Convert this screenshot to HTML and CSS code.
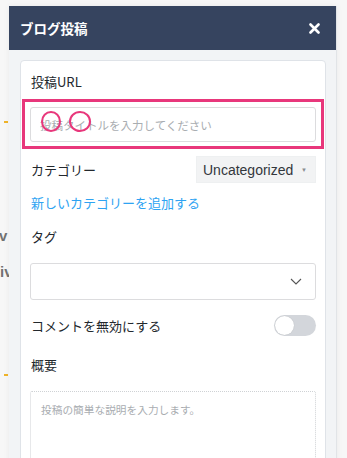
FILE: index.html
```html
<!DOCTYPE html>
<html lang="ja">
<head>
    <meta charset="UTF-8">
    <meta name="viewport" content="width=device-width, initial-scale=1.0">
    <title>ブログ投稿</title>
    <link rel="stylesheet" href="styles.css">
</head>
<body>
    <div class="page">
        <div class="behind">
            <div class="tick tick-top"></div>
            <div class="behind-text text-v">v</div>
            <div class="behind-text text-iv">iv</div>
            <div class="tick tick-bottom"></div>
        </div>

        <div class="modal">
            <div class="modal-header">
                <span class="modal-title">ブログ投稿</span>
                <svg class="close" width="11" height="11" viewBox="0 0 11 11">
                    <path d="M1.5 1.5 L9.5 9.5 M9.5 1.5 L1.5 9.5" stroke="#fff" stroke-width="2.6" stroke-linecap="round"/>
                </svg>
            </div>

            <div class="modal-body">
                <div class="card">
                    <div class="label label-first">投稿URL</div>

                    <div class="highlight">
                        <div class="url-field">
                            <input type="text" class="text-input" placeholder="投稿タイトルを入力してください">
                            <span class="mark mark-1"></span>
                            <span class="mark mark-2"></span>
                        </div>
                    </div>

                    <div class="row category-row">
                        <span class="label">カテゴリー</span>
                        <div class="select-small">
                            <span>Uncategorized</span>
                            <span class="caret">▼</span>
                        </div>
                    </div>

                    <a class="add-link" href="#">新しいカテゴリーを追加する</a>

                    <div class="label label-tag">タグ</div>
                    <div class="tag-select">
                        <svg width="12" height="7" viewBox="0 0 12 7">
                            <path d="M1 1 L6 6 L11 1" fill="none" stroke="#555" stroke-width="1.1"/>
                        </svg>
                    </div>

                    <div class="row toggle-row">
                        <span class="label">コメントを無効にする</span>
                        <div class="toggle"><span class="knob"></span></div>
                    </div>

                    <div class="label label-summary">概要</div>
                    <textarea class="summary" placeholder="投稿の簡単な説明を入力します。"></textarea>
                </div>
            </div>
        </div>

        <div class="behind-right"></div>
    </div>
</body>
</html>
```

FILE: styles.css
```css
* {
    margin: 0;
    padding: 0;
    box-sizing: border-box;
}

body {
    font-family: "Liberation Sans", "Noto Sans CJK JP", sans-serif;
    background: #f7f7f7;
    color: #23282d;
}

.page {
    display: flex;
    align-items: flex-start;
    height: 458px;
    overflow: hidden;
}

/* page content behind the modal */
.behind {
    width: 9px;
    flex-shrink: 0;
    overflow: hidden;
}

.tick {
    width: 4px;
    height: 2px;
    margin-left: 4px;
    background: #f0b429;
}

.tick-top {
    margin-top: 121px;
}

.behind-text {
    font-size: 15px;
    font-weight: bold;
    line-height: 18px;
    color: #727272;
    white-space: nowrap;
}

.text-v {
    margin-top: 104px;
    margin-left: -1px;
}

.text-iv {
    margin-top: 18px;
}

.tick-bottom {
    margin-top: 93px;
}

.behind-right {
    flex: 1;
}

/* modal */
.modal {
    width: 328px;
    margin-top: 6px;
    background: #f2f4f6;
    border-right: 1px solid #e1e4e7;
    height: 460px;
    box-shadow: 0 0 6px rgba(0,0,0,0.06);
}

.modal-header {
    height: 44px;
    background: #36445f;
    display: flex;
    justify-content: space-between;
    align-items: center;
    padding: 0 16px 0 11px;
}

.modal-title {
    color: #fff;
    font-size: 13.5px;
    font-weight: bold;
    font-family: "Noto Sans CJK JP", sans-serif;
}

.close {
    display: block;
}

.modal-body {
    padding: 10px 10px 0 11px;
}

.card {
    background: #fff;
    border: 1px solid #dfe3e8;
    border-radius: 4px;
    padding: 12px 9px 0 9px;
    height: 420px;
}

.label {
    font-family: "Noto Sans CJK JP", sans-serif;
    font-size: 13px;
    line-height: 18px;
    color: #23282d;
    padding-left: 1px;
}

.highlight {
    margin: 8px -8px 0 -8px;
    border: 3px solid #e8377b;
    padding: 5px 5px 4px 5px;
}

.url-field {
    position: relative;
}

.text-input {
    display: block;
    width: 100%;
    height: 35px;
    border: 1px solid #dcdcde;
    border-radius: 3px;
    padding: 0 9px;
    font-family: "Noto Sans CJK JP", sans-serif;
    font-size: 11.5px;
    color: #333;
    background: #fff;
    outline: none;
}

.text-input::placeholder {
    color: #a9adb1;
}

/* hand-drawn style annotation circles */
.mark {
    position: absolute;
    top: 4px;
    height: 21px;
    border: 2.5px solid #e8377b;
    border-radius: 50%;
}

.mark-1 {
    left: 11px;
    width: 20px;
}

.mark-2 {
    left: 39px;
    width: 22px;
}

.row {
    display: flex;
    justify-content: space-between;
    align-items: center;
}

.category-row {
    margin-top: 7px;
}

.select-small {
    width: 120px;
    height: 27px;
    background: #f2f3f4;
    border: 1px solid #eef0f1;
    display: flex;
    align-items: center;
    justify-content: space-between;
    padding: 0 8px 0 6px;
    font-size: 14px;
    color: #32373c;
}

.caret {
    font-size: 6px;
    color: #8a8e92;
}

.add-link {
    display: block;
    margin-top: 11px;
    padding-left: 1px;
    font-family: "Noto Sans CJK JP", sans-serif;
    font-size: 13px;
    line-height: 18px;
    color: #2ea3f2;
    text-decoration: none;
}

.label-tag {
    margin-top: 16px;
}

.tag-select {
    margin-top: 17px;
    height: 37px;
    border: 1px solid #dcdcde;
    border-radius: 3px;
    display: flex;
    justify-content: flex-end;
    align-items: center;
    padding-right: 13px;
}

.tag-select svg {
    display: block;
}

.toggle-row {
    margin-top: 15px;
}

.toggle {
    width: 42px;
    height: 21px;
    border-radius: 11px;
    background: #d3d6db;
    padding: 1px;
}

.knob {
    display: block;
    width: 19px;
    height: 19px;
    border-radius: 50%;
    background: #fff;
    box-shadow: 0 0 1px rgba(0,0,0,0.2);
}

.label-summary {
    margin-top: 20px;
}

.summary {
    display: block;
    width: 100%;
    height: 90px;
    margin-top: 17px;
    border: 1px dotted #cfd2d5;
    border-radius: 2px;
    padding: 9px 10px;
    resize: none;
    font-family: "Noto Sans CJK JP", sans-serif;
    font-size: 10.7px;
    line-height: 18px;
    outline: none;
}

.summary::placeholder {
    color: #a9adb1;
}
```
